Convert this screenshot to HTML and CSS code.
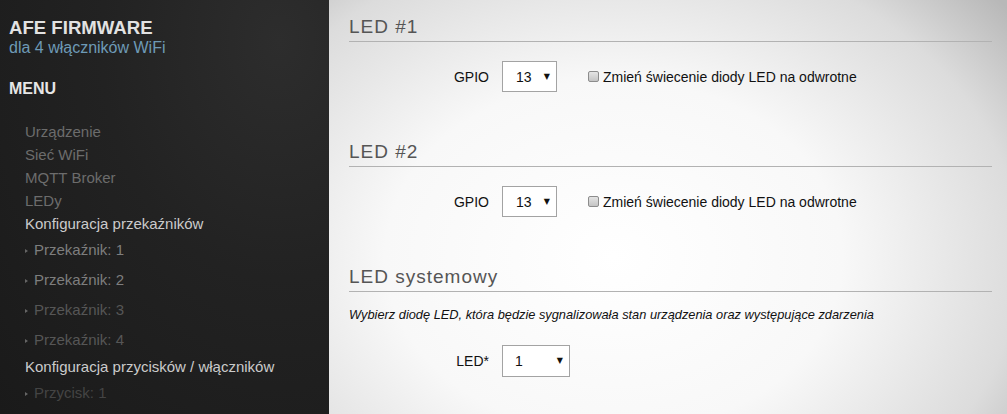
FILE: index.html
```html
<!DOCTYPE html>
<html lang="pl">
<head>
  <meta charset="UTF-8" />
  <title>AFE Firmware - LEDy</title>
  <link rel="stylesheet" href="styles.css">
</head>
<body>
  <aside class="sidebar">
    <h1 class="brand">AFE FIRMWARE</h1>
    <div class="brand-sub">dla 4 włączników WiFi</div>
    <div class="menu-title">MENU</div>
    <ul class="menu">
      <li class="item">Urządzenie</li>
      <li class="item">Sieć WiFi</li>
      <li class="item">MQTT Broker</li>
      <li class="item">LEDy</li>
      <li class="item group">Konfiguracja przekaźników</li>
      <li class="sub"><span class="dot"></span>Przekaźnik: 1</li>
      <li class="sub"><span class="dot"></span>Przekaźnik: 2</li>
      <li class="sub dim"><span class="dot"></span>Przekaźnik: 3</li>
      <li class="sub dim"><span class="dot"></span>Przekaźnik: 4</li>
      <li class="item group">Konfiguracja przycisków / włączników</li>
      <li class="sub dimmer"><span class="dot"></span>Przycisk: 1</li>
    </ul>
  </aside>

  <main class="content">
    <section class="section">
      <h2>LED #1</h2>
      <div class="row">
        <label class="row-label">GPIO</label>
        <div class="select"><span>13</span><span class="arrow">▼</span></div>
        <label class="check"><input type="checkbox">Zmień świecenie diody LED na odwrotne</label>
      </div>
    </section>

    <section class="section">
      <h2>LED #2</h2>
      <div class="row">
        <label class="row-label">GPIO</label>
        <div class="select"><span>13</span><span class="arrow">▼</span></div>
        <label class="check"><input type="checkbox">Zmień świecenie diody LED na odwrotne</label>
      </div>
    </section>

    <section class="section">
      <h2>LED systemowy</h2>
      <p class="hint">Wybierz diodę LED, która będzie sygnalizowała stan urządzenia oraz występujące zdarzenia</p>
      <div class="row row-led">
        <label class="row-label">LED*</label>
        <div class="select wide"><span>1</span><span class="arrow">▼</span></div>
      </div>
    </section>
  </main>
</body>
</html>
```

FILE: styles.css
```css
* {
  margin: 0;
  padding: 0;
  box-sizing: border-box;
}

html, body {
  height: 100%;
}

body {
  display: flex;
  font-family: "Liberation Sans", Arial, sans-serif;
  overflow: hidden;
}

/* sidebar */

.sidebar {
  width: 329px;
  flex-shrink: 0;
  background: radial-gradient(ellipse at 85% 10%, #2d2d2d 0%, #222 45%, #1a1a1a 100%);
  padding-left: 9px;
}

.brand {
  margin-top: 17px;
  font-size: 18.6px;
  line-height: 22px;
  font-weight: bold;
  color: #e2e2e2;
}

.brand-sub {
  font-size: 16px;
  line-height: 18px;
  color: #6e9ab6;
}

.menu-title {
  margin-top: 22px;
  font-size: 16px;
  line-height: 20px;
  font-weight: bold;
  color: #e6e6e6;
}

.menu {
  list-style: none;
  margin-top: 21px;
  padding-left: 16px;
}

.item {
  font-size: 15px;
  line-height: 23px;
  color: #6c6c6c;
}

.item.group {
  color: #cbcbcb;
}

.sub {
  font-size: 15px;
  line-height: 30px;
  color: #7e7e7e;
  display: flex;
  align-items: center;
}

.sub.dim {
  color: #565656;
}

.sub.dimmer {
  color: #444;
}

.dot {
  width: 0;
  height: 0;
  border-top: 2px solid transparent;
  border-bottom: 2px solid transparent;
  border-left: 3px solid #666;
  margin: 1px 6px 0 0;
}

/* content */

.content {
  flex: 1;
  padding: 16px 15px 0 20px;
  background: radial-gradient(ellipse 75% 95% at 42% 62%, #ffffff 0%, #f8f8f8 45%, #dcdcdc 80%, #b8b8b8 100%);
}

.section {
  margin-bottom: 49px;
}

.section h2 {
  font-size: 19px;
  line-height: 22px;
  font-weight: normal;
  letter-spacing: 1px;
  color: #555;
  padding-bottom: 3px;
  border-bottom: 1px solid #b2b2b2;
}

.row {
  display: flex;
  align-items: center;
  margin-top: 19px;
  height: 31px;
}

.row-label {
  width: 140px;
  text-align: right;
  margin-right: 13px;
  font-size: 14px;
  color: #111;
}

.select {
  width: 55px;
  height: 31px;
  border: 1px solid #a3a3a3;
  background: #fff;
  display: flex;
  align-items: center;
  justify-content: space-between;
  padding: 0 6px 0 13px;
  font-size: 14px;
  color: #111;
}

.select.wide {
  width: 68px;
  height: 32px;
  padding-left: 12px;
}

.arrow {
  font-family: "DejaVu Sans", sans-serif;
  font-size: 8px;
  color: #111;
}

.check {
  display: flex;
  align-items: center;
  margin-left: 31px;
  font-size: 14px;
  color: #111;
}

.check input {
  appearance: none;
  width: 11px;
  height: 11px;
  margin-right: 4px;
  border: 1px solid #8c8c8c;
  border-radius: 2px;
  background: linear-gradient(#e4e4e4, #c4c4c4);
}

.hint {
  margin-top: 15px;
  font-size: 12.8px;
  line-height: 16px;
  font-style: italic;
  color: #111;
}

.row-led {
  margin-top: 22px;
}
```
